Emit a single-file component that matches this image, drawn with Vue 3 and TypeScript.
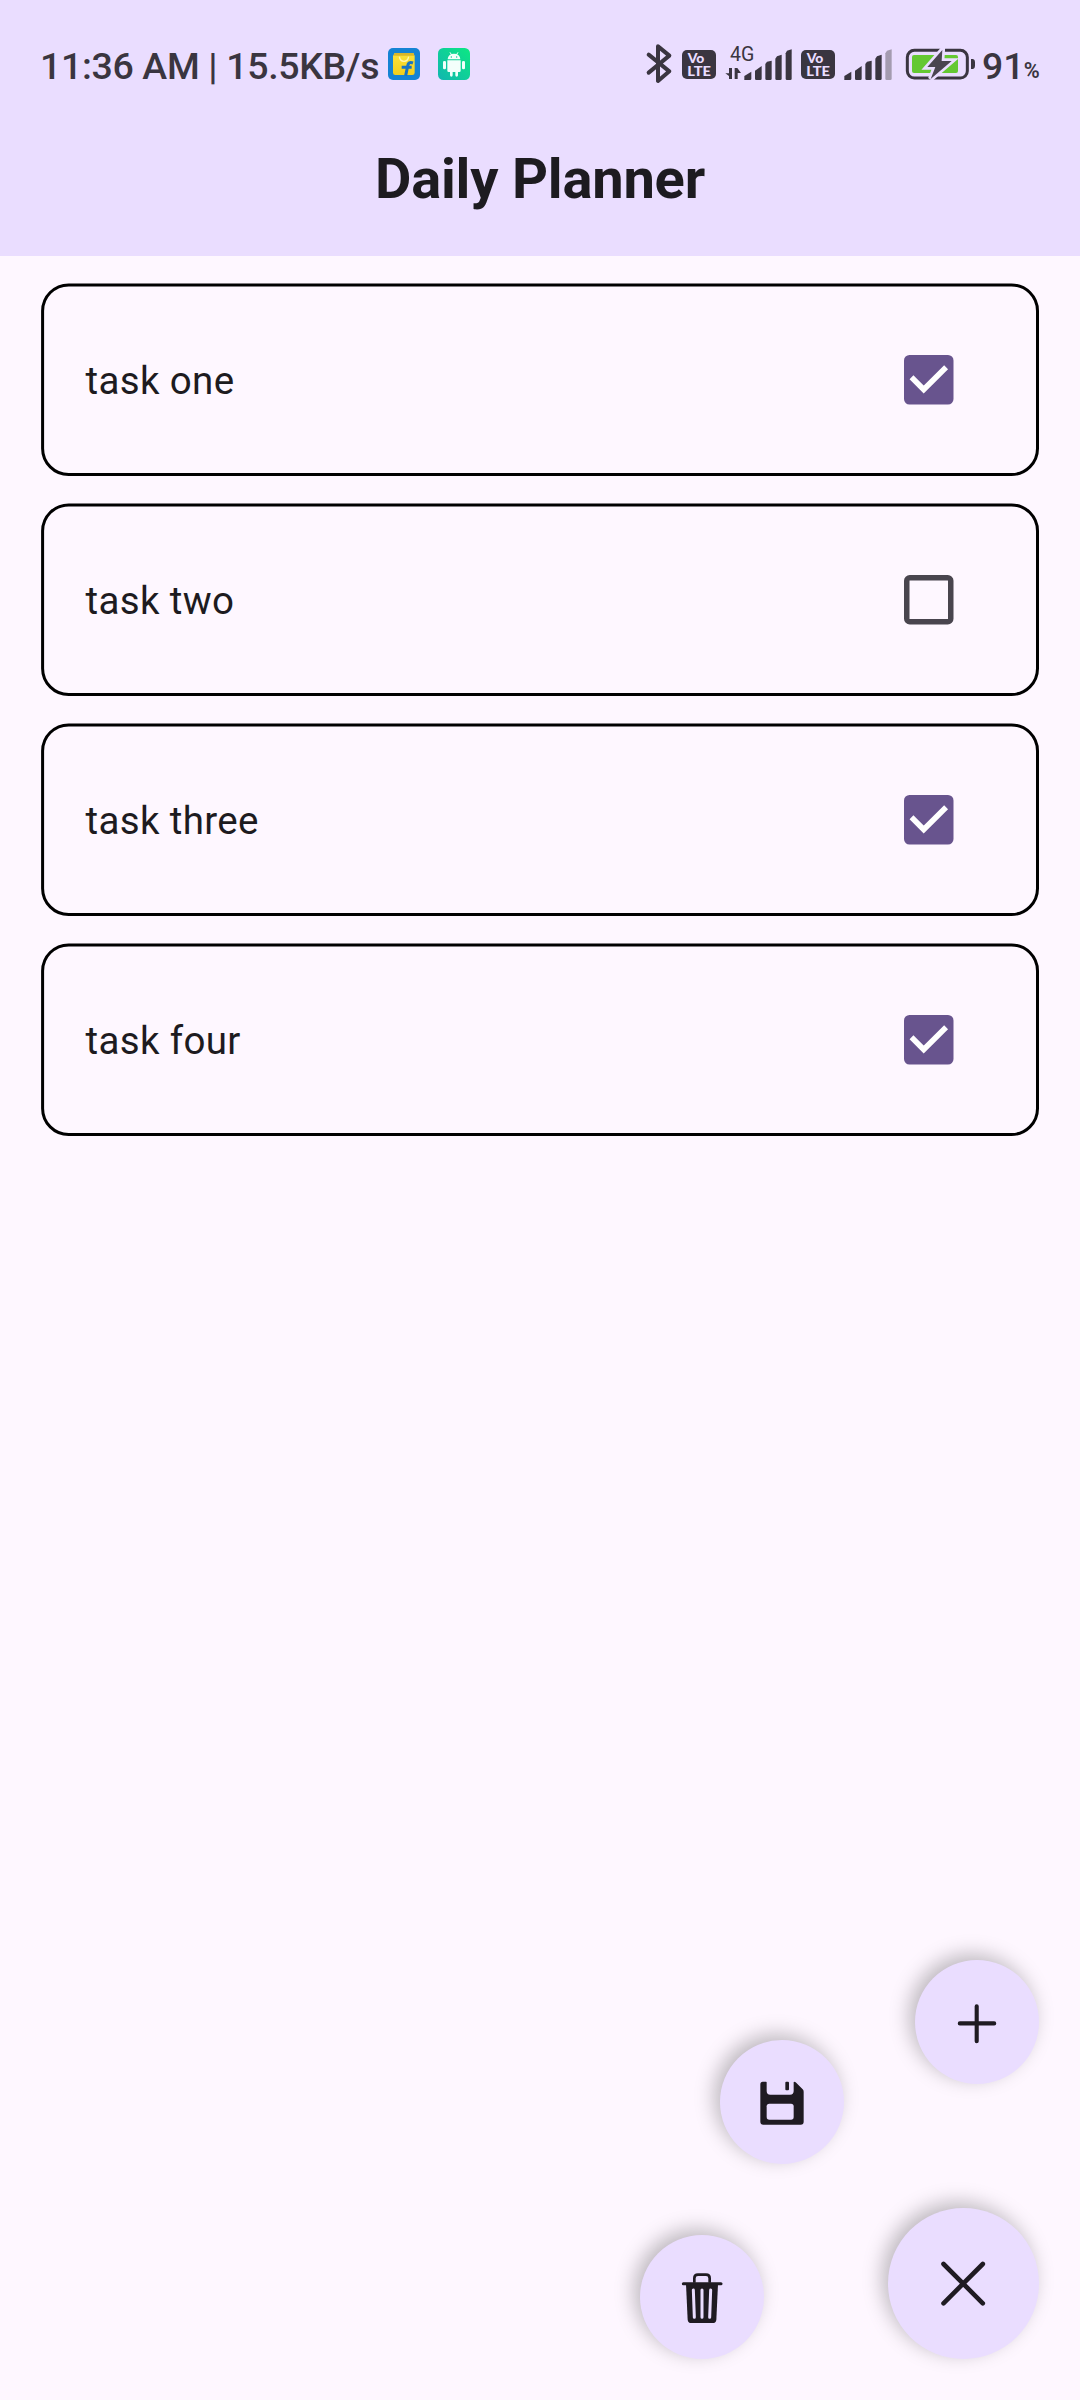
<script setup lang="ts">
import { ref } from 'vue'

interface Task {
  id: number
  title: string
  done: boolean
}

const tasks = ref<Task[]>([
  { id: 1, title: 'task one', done: true },
  { id: 2, title: 'task two', done: false },
  { id: 3, title: 'task three', done: true },
  { id: 4, title: 'task four', done: true },
])

function toggle(task: Task): void {
  task.done = !task.done
}
</script>

<template>
  <div class="screen">
    <header class="app-bar">
      <div class="status-bar">
        <span class="clock">11:36 AM | 15.5KB/s</span>
        <svg class="notif" viewBox="0 0 96 96">
          <defs>
            <linearGradient id="bag" x1="0" y1="0" x2="0" y2="1">
              <stop offset="0" stop-color="#fbe23c" />
              <stop offset="1" stop-color="#f3cf1c" />
            </linearGradient>
          </defs>
          <rect width="96" height="96" rx="15" fill="#1583d3" />
          <path d="M20 15H76L80 24V74Q80 81 73 81H22Q15 81 15 74V24Z" fill="url(#bag)" />
          <path d="M20 15H76L79 23H16Z" fill="#d9b62a" />
          <path d="M34 26Q36 40 48 40Q60 40 62 26" fill="none" stroke="#fff6b0" stroke-width="4" />
          <path d="M75 45Q61 40 59 54L53 83M41 58H71" fill="none" stroke="#1673c4" stroke-width="9" />
        </svg>
        <svg class="notif" viewBox="0 0 96 96">
          <defs>
            <linearGradient id="droid" x1="0" y1="1" x2="1" y2="0">
              <stop offset="0" stop-color="#12b6b0" />
              <stop offset="1" stop-color="#0ce882" />
            </linearGradient>
          </defs>
          <rect width="96" height="96" rx="16" fill="url(#droid)" />
          <g fill="#f3fffb">
            <path d="M29 34Q30 17 48 17Q66 17 67 34Z" />
            <path d="M36 13L41 21M60 13L55 21" stroke="#f3fffb" stroke-width="3" />
            <path d="M28 37H68V68Q68 72 64 72H60V82Q60 86 56 86Q52 86 52 82V72H44V82Q44 86 40 86Q36 86 36 82V72H32Q28 72 28 68Z" />
            <rect x="15" y="39" width="9" height="25" rx="4" />
            <rect x="72" y="39" width="9" height="25" rx="4" />
          </g>
          <circle cx="40" cy="27" r="2.2" fill="#12cf9a" />
          <circle cx="56" cy="27" r="2.2" fill="#12cf9a" />
        </svg>
        <svg class="system" viewBox="0 0 1350 210">
          <path
            d="M56 74L118 124L84 153V49L118 77L56 128"
            fill="none" stroke="#3a3540" stroke-width="12" stroke-linecap="round" stroke-linejoin="round"
          />
          <g v-for="x in [156, 513]" :key="x" :transform="`translate(${x} 60)`">
            <rect width="102" height="87" rx="15" fill="#3a3540" />
            <text class="volte" x="17" y="39" textLength="50" lengthAdjust="spacingAndGlyphs">Vo</text>
            <text class="volte" x="16" y="77" textLength="71" lengthAdjust="spacingAndGlyphs">LTE</text>
          </g>
          <text class="net" x="300" y="93" textLength="73" lengthAdjust="spacingAndGlyphs">4G</text>
          <g fill="#3a3540">
            <path d="M297 114H306V147H297V138L286 130H297ZM314 147V114H322L333 129H323V147Z" />
            <path d="M343 150V138L364 125V146Q364 150 360 150Z" />
            <path d="M375 150V122L395 108V146Q395 150 391 150H379Q375 150 375 146Z" />
            <path d="M406 102L411 95L425 92V146Q425 150 421 150H410Q406 150 406 146Z" />
            <path d="M436 86L441 79L455 74V146Q455 150 451 150H440Q436 150 436 146Z" />
            <path d="M467 70L471 62L485 58V146Q485 150 481 150H471Q467 150 467 146Z" />
            <path d="M643 150V138L664 125V146Q664 150 660 150Z" />
            <path d="M675 150V122L695 108V146Q695 150 691 150H679Q675 150 675 146Z" />
            <path d="M706 102L711 95L725 92V146Q725 150 721 150H710Q706 150 706 146Z" />
            <path d="M736 86L741 79L755 74V146Q755 150 751 150H740Q736 150 736 146Z" />
            <path d="M766 70L771 62L785 58V146Q785 150 781 150H770Q766 150 766 146Z" fill="#a49bb0" />
          </g>
          <rect x="832" y="61" width="180" height="83" rx="21" fill="none" stroke="#3a3540" stroke-width="9" />
          <path d="M1023 87H1029Q1035 88 1035 96V108Q1035 116 1029 117H1023Z" fill="#3a3540" />
          <rect x="846" y="75" width="138" height="54" rx="6" fill="#64c832" />
          <path
            d="M937 60L892 111H916L902 147L965 93H935Z"
            fill="#4a4550" stroke="#eaddff" stroke-width="16" paint-order="stroke"
          />
          <text class="level" x="1056" y="148">91</text>
          <text class="percent" x="1181" y="145" textLength="48" lengthAdjust="spacingAndGlyphs">%</text>
        </svg>
      </div>
      <h1 class="title">Daily Planner</h1>
    </header>

    <ul class="tasks">
      <li v-for="task in tasks" :key="task.id" class="task">
        <svg class="outline" viewBox="0 0 998 193">
          <rect x="1.6" y="1.9" width="994.9" height="189.6" rx="26.1" fill="none" stroke="#000" stroke-width="3" />
        </svg>
        <span class="label">{{ task.title }}</span>
        <svg class="check" viewBox="0 0 50 50" @click="toggle(task)">
          <template v-if="task.done">
            <rect width="49.5" height="49.5" rx="5.5" fill="#68548e" />
            <path d="M7.5 22.3L19.7 34.5L42.1 12.2" fill="none" stroke="#fff" stroke-width="5.5" />
          </template>
          <rect v-else x="2.75" y="2.75" width="44" height="44" rx="3" fill="none" stroke="#49454e" stroke-width="5.5" />
        </svg>
      </li>
    </ul>

    <nav class="fab-menu">
      <button class="fab add" aria-label="Add">
        <svg width="124" height="124" viewBox="0 0 124 124">
          <path d="M61.7 46.2V81.2M44.8 63.4H79.2" fill="none" stroke="#1f1b22" stroke-width="4.1" stroke-linecap="round" />
        </svg>
      </button>
      <button class="fab save" aria-label="Save">
        <svg width="124" height="124" viewBox="0 0 372 372">
          <path
            d="M128 125H138Q140 125 140 127V153Q140 164 151 164H210Q221 164 221 153V127Q221 125 223 125Q225 125 227 127L248 148Q251 151 251 155V245Q251 254 242 254H130Q121 254 121 245V133Q121 125 128 125Z"
            fill="#1f1b22"
          />
          <rect x="140" y="191" width="81" height="48" rx="8" fill="#eaddff" />
          <rect x="196" y="125" width="11" height="26" rx="3" fill="#1f1b22" />
        </svg>
      </button>
      <button class="fab remove" aria-label="Delete">
        <svg width="124" height="124" viewBox="0 0 372 372">
          <path
            d="M163 143V130Q163 119 174 119H198Q209 119 209 130V143"
            fill="none" stroke="#1f1b22" stroke-width="8"
          />
          <path d="M130 146H243" stroke="#1f1b22" stroke-width="9" stroke-linecap="round" />
          <path d="M138 147H234L229 254Q228 264 218 264H154Q144 264 143 254Z" fill="#1f1b22" />
          <path
            d="M160 165L163 247M186 165V247M212 165L209 247"
            fill="none" stroke="#eaddff" stroke-width="9" stroke-linecap="round"
          />
        </svg>
      </button>
      <button class="fab close" aria-label="Close">
        <svg width="151" height="151" viewBox="0 0 151 151">
          <path d="M55.5 56L94.8 95.3M94.8 56L55.5 95.3" fill="none" stroke="#1f1b22" stroke-width="4.6" stroke-linecap="round" />
        </svg>
      </button>
    </nav>
  </div>
</template>

<style>
body {
  margin: 0;
}
</style>

<style scoped>
.screen {
  position: relative;
  width: 1080px;
  height: 2400px;
  overflow: hidden;
  background: #fef7ff;
  color: #1d1b20;
  font-family: Roboto, 'Liberation Sans', sans-serif;
}

.app-bar {
  height: 256px;
  background: #eaddff;
}

.status-bar {
  display: flex;
  align-items: center;
  height: 130px;
  padding-left: 40px;
}

.clock {
  width: 348px;
  padding-top: 2px;
  font-size: 37.5px;
  font-weight: 500;
  line-height: 44px;
  letter-spacing: -0.35px;
  white-space: nowrap;
  color: #3a3540;
}

.notif {
  width: 32px;
  height: 32px;
  margin: 0 18px 2px 0;
}

.system {
  width: 450px;
  height: 70px;
  margin-left: auto;
}

.system text {
  font-family: Roboto, 'Liberation Sans', sans-serif;
  fill: #3a3540;
}

.system .volte {
  font-family: Lato, Roboto, sans-serif;
  font-size: 40px;
  font-weight: 900;
  fill: #eaddff;
}

.system .net {
  font-size: 58px;
}

.system .level {
  font-size: 112px;
  font-weight: 500;
}

.system .percent {
  font-size: 65px;
  font-weight: 600;
}

.title {
  margin: 0;
  padding-top: 16px;
  font-size: 56px;
  font-weight: 700;
  line-height: 66px;
  letter-spacing: -0.2px;
  text-align: center;
}

.tasks {
  display: flex;
  flex-direction: column;
  gap: 27px;
  margin: 0;
  padding: 27px 41px;
  list-style: none;
}

.task {
  position: relative;
  display: flex;
  align-items: center;
  justify-content: space-between;
  box-sizing: border-box;
  height: 193px;
  padding: 0 85px 0 44.5px;
}

.outline {
  position: absolute;
  inset: 0;
  width: 998px;
  height: 193px;
}

.label {
  padding-top: 2px;
  font-size: 38.5px;
  line-height: 55px;
  letter-spacing: 0.35px;
}

.check {
  position: relative;
  width: 50px;
  height: 50px;
}

.fab-menu {
  position: absolute;
  right: 41px;
  bottom: 41px;
  width: 399px;
  height: 399px;
}

.fab {
  position: absolute;
  display: flex;
  width: 124px;
  height: 124px;
  padding: 0;
  border: 0;
  border-radius: 50%;
  background: #eaddff;
  box-shadow: -5.5px -5.5px 20px rgba(0, 0, 0, 0.26);
}

.add {
  top: 0;
  right: 0;
}

.save {
  top: 80px;
  left: 80px;
}

.remove {
  bottom: 0;
  left: 0;
}

.close {
  right: 0;
  bottom: 0;
  width: 151px;
  height: 151px;
}
</style>
